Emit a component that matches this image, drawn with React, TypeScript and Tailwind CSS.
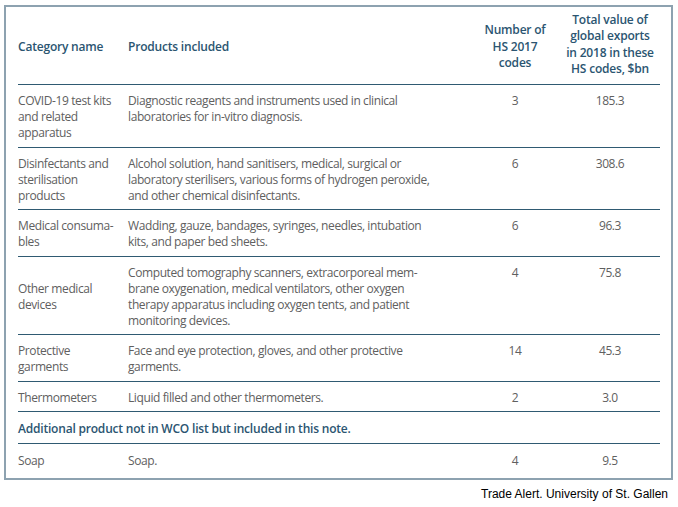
const rows = [
  {
    category: ["COVID-19 test kits", "and related", "apparatus"],
    products: ["Diagnostic reagents and instruments used in clinical", "laboratories for in-vitro diagnosis."],
    codes: "3",
    value: "185.3",
  },
  {
    category: ["Disinfectants and", "sterilisation", "products"],
    products: [
      "Alcohol solution, hand sanitisers, medical, surgical or",
      "laboratory sterilisers, various forms of hydrogen peroxide,",
      "and other chemical disinfectants.",
    ],
    codes: "6",
    value: "308.6",
  },
  {
    category: ["Medical consuma-", "bles"],
    products: ["Wadding, gauze, bandages, syringes, needles, intubation", "kits, and paper bed sheets."],
    codes: "6",
    value: "96.3",
  },
  {
    category: ["Other medical", "devices"],
    products: [
      "Computed tomography scanners, extracorporeal mem-",
      "brane oxygenation, medical ventilators, other oxygen",
      "therapy apparatus including oxygen tents, and patient",
      "monitoring devices.",
    ],
    codes: "4",
    value: "75.8",
    centered: true,
  },
  {
    category: ["Protective", "garments"],
    products: ["Face and eye protection, gloves, and other protective", "garments."],
    codes: "14",
    value: "45.3",
  },
  {
    category: ["Thermometers"],
    products: ["Liquid filled and other thermometers."],
    codes: "2",
    value: "3.0",
  },
];

function Lines({ lines }: { lines: string[] }) {
  return (
    <>
      {lines.map((line) => (
        <div key={line}>{line}</div>
      ))}
    </>
  );
}

export default function App() {
  return (
    <div className="h-[507px] w-[678px] bg-white font-['Open_Sans',sans-serif]">
      <div className="ml-[4px] pt-[5px]">
        <div className="w-[669px] border-2 border-[#8da2b0] pl-[12px] pr-[11px] text-[12px] leading-[16px] tracking-[-0.4px] text-[#606060]">
          <div className="grid h-[78px] grid-cols-[110px_342px_90px_100px] items-center border-b border-[#2f5a72] font-semibold tracking-[-0.2px] text-[#2b5571]">
            <div className="pt-[2px]">Category name</div>
            <div className="pt-[2px]">Products included</div>
            <div className="pt-[3px] text-center leading-[16.5px]">
              Number of
              <br />
              HS 2017
              <br />
              codes
            </div>
            <div className="pb-[2px] text-center leading-[16.5px]">
              Total value of
              <br />
              global exports
              <br />
              in 2018 in these
              <br />
              HS codes, $bn
            </div>
          </div>

          {rows.map((row) => (
            <div
              key={row.value}
              className="grid grid-cols-[110px_342px_90px_100px] border-b border-[#2f5a72] pb-[5.5px] pt-[8px]"
            >
              <div className={row.centered ? "self-center" : ""}>
                <Lines lines={row.category} />
              </div>
              <div>
                <Lines lines={row.products} />
              </div>
              <div className="text-center">{row.codes}</div>
              <div className="text-center">{row.value}</div>
            </div>
          ))}

          <div className="border-b border-[#2f5a72] pb-[5.5px] pt-[9px] font-semibold tracking-[-0.2px] text-[#2b5571]">
            Additional product not in WCO list but included in this note.
          </div>

          <div className="grid grid-cols-[110px_342px_90px_100px] pb-[9px] pt-[9px]">
            <div>Soap</div>
            <div>Soap.</div>
            <div className="text-center">4</div>
            <div className="text-center">9.5</div>
          </div>
        </div>

        <div className="mt-[6px] w-[664px] text-right font-['Liberation_Sans',Arial,sans-serif] text-[12px] leading-[16px] text-black">
          Trade Alert. University of St. Gallen
        </div>
      </div>
    </div>
  );
}
